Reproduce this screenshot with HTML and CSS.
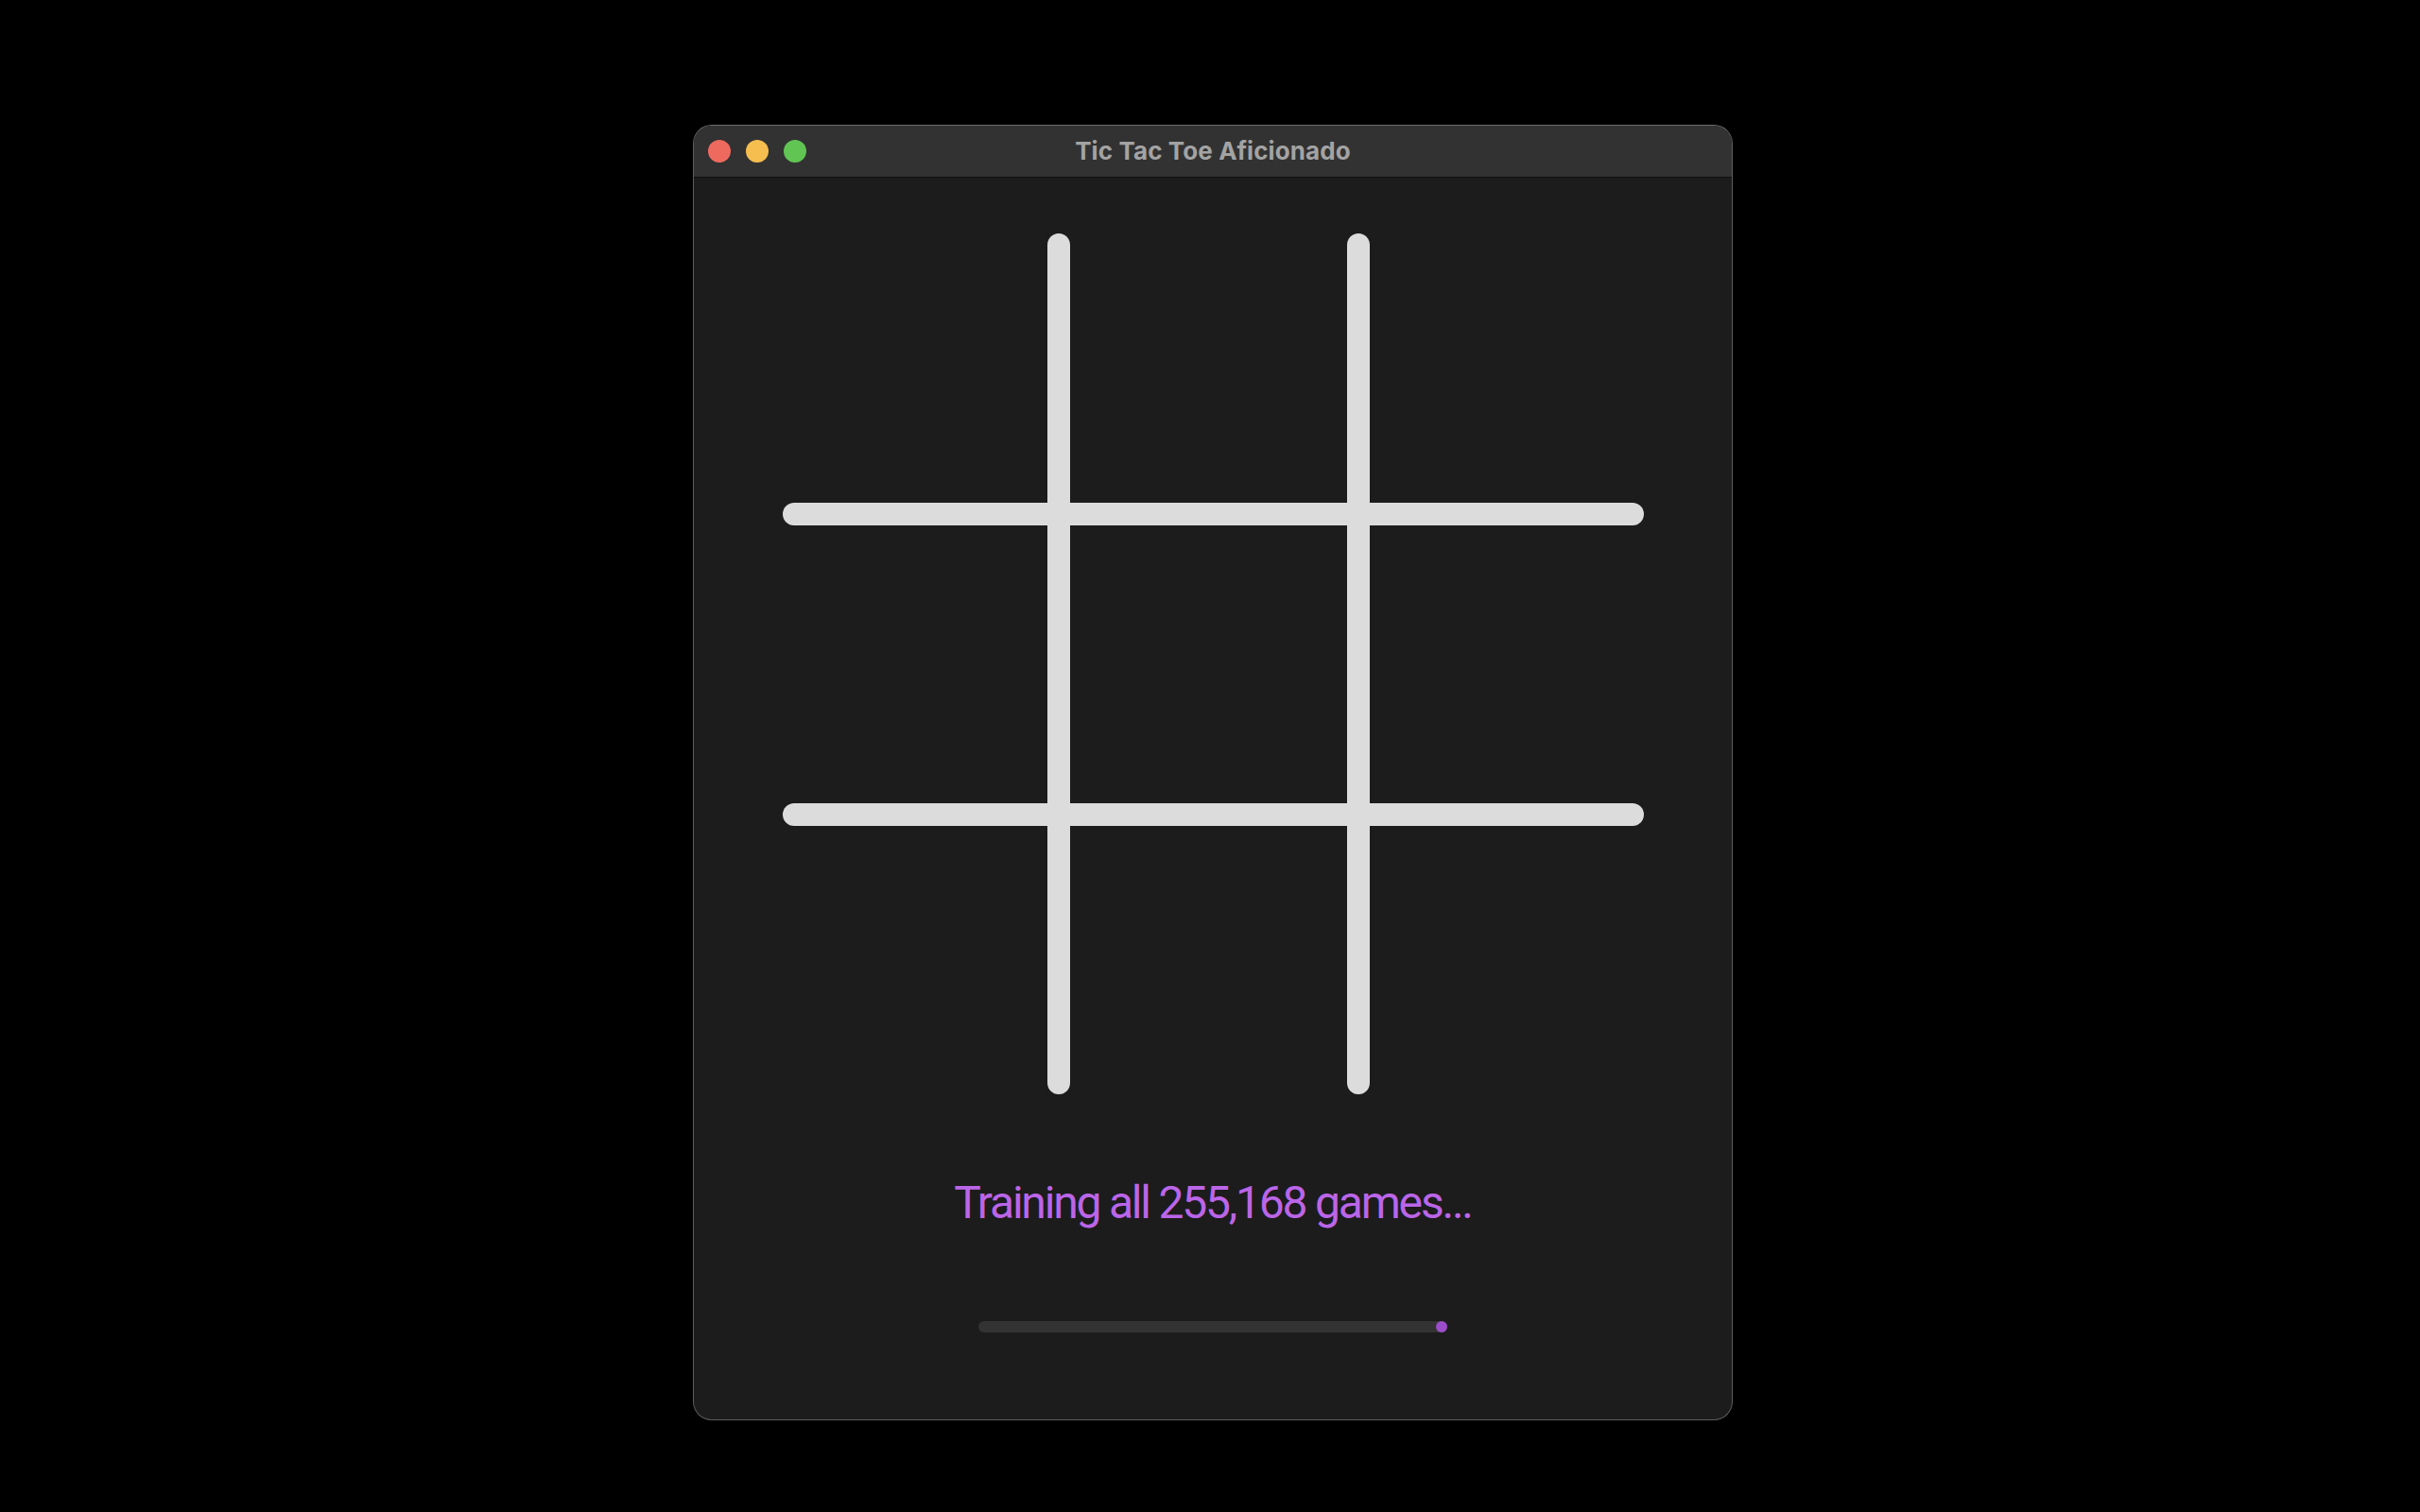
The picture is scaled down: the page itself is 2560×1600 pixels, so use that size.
FILE: index.html
```html
<!DOCTYPE html>
<html lang="en">
    <head>
        <meta charset="UTF-8" />
        <meta name="viewport" content="width=device-width, initial-scale=1.0" />
        <title>Tic Tac Toe Aficionado</title>
        <link rel="stylesheet" href="styles.css">
    </head>
    <body>
        <div class="window">
            <div class="titlebar">
                <div class="lights">
                    <span class="light red"></span>
                    <span class="light yellow"></span>
                    <span class="light green"></span>
                </div>
                <div class="title">Tic Tac Toe Aficionado</div>
            </div>

            <div class="content">
                <svg class="board" width="911" height="911" viewBox="0 0 911 911">
                    <rect x="280" y="0" width="24" height="911" rx="12" />
                    <rect x="597" y="0" width="24" height="911" rx="12" />
                    <rect x="0" y="285" width="911" height="24" rx="12" />
                    <rect x="0" y="603" width="911" height="24" rx="12" />
                </svg>

                <p class="status">Training all 255,168 games...</p>

                <div class="progress">
                    <div class="progress-fill"></div>
                </div>
            </div>
        </div>
    </body>
</html>
```

FILE: styles.css
```css
:root {
    --desk: #000000;
    --window: #1c1c1c;
    --titlebar: #323232;
    --border: #5c5c5c;
    --line: #dcdcdc;
    --accent: #bb65e9;
    --accent-dark: #9b4dca;
    --track: #333333;
}

* {
    margin: 0;
    padding: 0;
    box-sizing: border-box;
}

body {
    font-family: Inter, "Noto Sans", "Liberation Sans", sans-serif;
    background-color: var(--desk);
    -webkit-font-smoothing: antialiased;
}

.window {
    width: 1100px;
    height: 1371px;
    margin: 132px 0 0 733px;
    background-color: var(--window);
    border: 1px solid var(--border);
    border-top-color: #6e6e6e;
    border-radius: 20px;
    overflow: hidden;
}

.titlebar {
    position: relative;
    height: 55px;
    padding-bottom: 2px;
    background-color: var(--titlebar);
    border-bottom: 1px solid #0f0f0f;
    display: flex;
    align-items: center;
    justify-content: center;
}

.lights {
    position: absolute;
    left: 15px;
    top: 15px;
    display: flex;
    gap: 16px;
}

.light {
    width: 24px;
    height: 24px;
    border-radius: 50%;
}

.red {
    background-color: #ee6a5f;
}

.yellow {
    background-color: #f5be4f;
}

.green {
    background-color: #61c554;
}

.title {
    color: #a3a3a3;
    font-size: 26px;
    font-weight: 700;
    letter-spacing: 0.1px;
}

.content {
    display: flex;
    flex-direction: column;
    align-items: center;
    padding-top: 59px;
}

.board {
    display: block;
    fill: var(--line);
}

.status {
    margin-top: 86px;
    color: var(--accent);
    font-family: Roboto, "Noto Sans", sans-serif;
    font-size: 48px;
    line-height: 58px;
    font-weight: 400;
    letter-spacing: -2.2px;
}

.progress {
    margin-top: 96px;
    width: 496px;
    height: 12px;
    border-radius: 6px;
    background-color: var(--track);
    display: flex;
    justify-content: flex-end;
}

.progress-fill {
    width: 12px;
    height: 12px;
    border-radius: 50%;
    background-color: var(--accent-dark);
}
```
